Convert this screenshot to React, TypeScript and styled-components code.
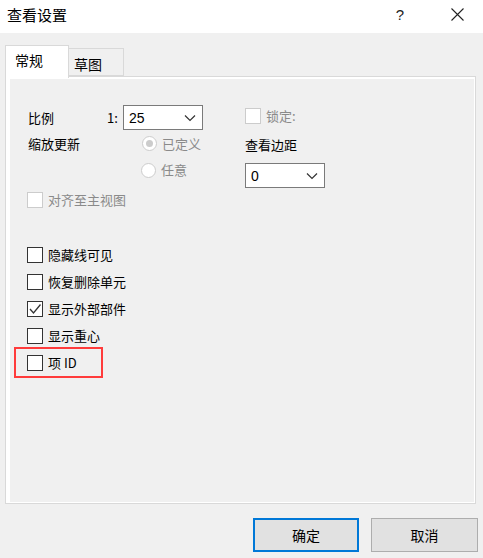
import React from 'react';
import styled, { createGlobalStyle } from 'styled-components';

const GlobalStyle = createGlobalStyle`
  html, body {
    margin: 0;
    padding: 0;
    background: #f0f0f0;
  }
  body {
    font-family: "Noto Sans CJK SC", "Microsoft YaHei", "Noto Sans", sans-serif;
    font-size: 13px;
    color: #000;
  }
`;

const Dialog = styled.div`
  width: 483px;
  height: 558px;
  display: flex;
  flex-direction: column;
  background: #f0f0f0;
  overflow: hidden;
`;

const TitleBar = styled.div`
  height: 33px;
  background: #fff;
  display: flex;
  align-items: center;
  padding-left: 7px;
  padding-right: 6px;
`;

const Title = styled.div`
  flex: 1;
  font-size: 15px;
  line-height: 20px;
  margin-top: -3px;
`;

const TitleButton = styled.div<{ $gap?: number }>`
  width: 40px;
  height: 33px;
  margin-right: ${p => p.$gap || 0}px;
  display: flex;
  align-items: center;
  justify-content: center;
  font-family: "Segoe UI", "Liberation Sans", sans-serif;
  font-size: 15px;
  color: #222;
  margin-top: -4px;
`;

const Body = styled.div`
  flex: 1;
  padding: 12px 5px 0 5px;
  display: flex;
  flex-direction: column;
`;

const TabRow = styled.div`
  display: flex;
  align-items: flex-end;
  height: 31px;
  position: relative;
  z-index: 1;
`;

const Tab = styled.div<{ $active?: boolean }>`
  box-sizing: border-box;
  height: ${p => (p.$active ? 33 : 28)}px;
  margin-bottom: ${p => (p.$active ? -2 : 0)}px;
  padding: ${p => (p.$active ? '4px 0 0 9px' : '5px 0 0 5px')};
  width: ${p => (p.$active ? 64 : 55)}px;
  background: ${p => (p.$active ? '#fff' : '#f0f0f0')};
  border: 1px solid #d9d9d9;
  border-bottom: ${p => (p.$active ? 'none' : '1px solid #d9d9d9')};
  border-left: ${p => (p.$active ? '1px solid #d9d9d9' : 'none')};
  font-size: 14px;
  line-height: 20px;
`;

const Panel = styled.div`
  box-sizing: border-box;
  width: 471px;
  height: 428px;
  border: 1px solid #d9d9d9;
  background: #fff;
  padding: 2px 1px 1px 4px;
  display: flex;
`;

const PanelInner = styled.div`
  flex: 1;
  background: #f0f0f0;
  padding: 26px 0 0 17px;
  display: flex;
  flex-direction: column;
`;

const TopGrid = styled.div`
  display: grid;
  grid-template-columns: 218px 1fr;
`;

const Column = styled.div`
  display: flex;
  flex-direction: column;
`;

const Row = styled.div<{ $h: number; $indent?: number }>`
  height: ${p => p.$h}px;
  display: flex;
  align-items: center;
  padding-left: ${p => p.$indent || 0}px;
`;

const Label = styled.span<{ $w?: number; $disabled?: boolean }>`
  display: inline-block;
  width: ${p => (p.$w ? `${p.$w}px` : 'auto')};
  color: ${p => (p.$disabled ? '#8a8a8a' : '#000')};
  line-height: 18px;
  white-space: nowrap;
`;

const Select = styled.div<{ $w: number }>`
  box-sizing: border-box;
  width: ${p => p.$w}px;
  height: 25px;
  border: 1px solid #7a7a7a;
  background: #fff;
  display: flex;
  align-items: center;
  padding: 0 6px 0 5px;
  font-family: "Segoe UI", "Liberation Sans", sans-serif;
  font-size: 14px;
  span {
    flex: 1;
  }
`;

const Box = styled.div<{ $disabled?: boolean }>`
  box-sizing: border-box;
  width: 16px;
  height: 16px;
  flex: none;
  border: 1px solid ${p => (p.$disabled ? '#cccccc' : '#333333')};
  background: #fff;
  margin-right: 5px;
  display: flex;
  align-items: center;
  justify-content: center;
`;

const Radio = styled.div<{ $checked?: boolean }>`
  box-sizing: border-box;
  width: 15px;
  height: 15px;
  flex: none;
  border-radius: 50%;
  border: 1px solid #cccccc;
  background: #fff;
  margin-right: 5px;
  display: flex;
  align-items: center;
  justify-content: center;
  &::after {
    content: '';
    display: ${p => (p.$checked ? 'block' : 'none')};
    width: 7px;
    height: 7px;
    border-radius: 50%;
    background: #cccccc;
  }
`;

const CheckList = styled.div`
  margin-top: 24px;
  display: flex;
  flex-direction: column;
`;

const CheckRow = styled.div`
  height: 27px;
  display: flex;
  align-items: center;
`;

const Highlight = styled.div`
  box-sizing: border-box;
  width: 89px;
  height: 31px;
  margin-left: -13px;
  padding-left: 11px;
  border: 2px solid #ff3b3b;
  display: flex;
  align-items: center;
`;

const Footer = styled.div`
  display: flex;
  justify-content: flex-end;
  gap: 12px;
  padding-top: 14px;
`;

const Button = styled.div<{ $primary?: boolean; $w: number }>`
  box-sizing: border-box;
  width: ${p => p.$w}px;
  height: 34px;
  background: #e1e1e1;
  border: ${p => (p.$primary ? '2px solid #0078d7' : '1px solid #adadad')};
  display: flex;
  align-items: center;
  justify-content: center;
  font-size: 14px;
`;

const Chevron = () => (
  <svg width="12" height="8" viewBox="0 0 12 8">
    <path d="M1 1.5 L6 6.5 L11 1.5" fill="none" stroke="#333" strokeWidth="1.2" />
  </svg>
);

const Check = () => (
  <svg width="14" height="14" viewBox="0 0 14 14">
    <path d="M2 7 L5.5 11 L12.5 2.5" fill="none" stroke="#333" strokeWidth="1.3" />
  </svg>
);

const CloseIcon = () => (
  <svg width="13" height="13" viewBox="0 0 13 13">
    <path d="M0.5 0.5 L12.5 12.5 M12.5 0.5 L0.5 12.5" stroke="#222" strokeWidth="1.1" />
  </svg>
);

const options = [
  { label: '隐藏线可见', checked: false },
  { label: '恢复删除单元', checked: false },
  { label: '显示外部部件', checked: true },
  { label: '显示重心', checked: false },
];

export default function App() {
  return (
    <Dialog>
      <GlobalStyle />
      <TitleBar>
        <Title>查看设置</Title>
        <TitleButton $gap={17}>?</TitleButton>
        <TitleButton>
          <CloseIcon />
        </TitleButton>
      </TitleBar>
      <Body>
        <TabRow>
          <Tab $active>常规</Tab>
          <Tab>草图</Tab>
        </TabRow>
        <Panel>
          <PanelInner>
            <TopGrid>
              <Column>
                <Row $h={25}>
                  <Label $w={79} style={{ paddingLeft: 1 }}>比例</Label>
                  <Label $w={16}>1:</Label>
                  <Select $w={80}>
                    <span>25</span>
                    <Chevron />
                  </Select>
                </Row>
                <Row $h={27}>
                  <Label $w={114} style={{ paddingLeft: 1 }}>缩放更新</Label>
                  <Radio $checked />
                  <Label $disabled>已定义</Label>
                </Row>
                <Row $h={26} $indent={114}>
                  <Radio />
                  <Label $disabled>任意</Label>
                </Row>
                <Row $h={34}>
                  <Box $disabled />
                  <Label $disabled>对齐至主视图</Label>
                </Row>
              </Column>
              <Column>
                <Row $h={21}>
                  <Box $disabled />
                  <Label $disabled>锁定:</Label>
                </Row>
                <Row $h={37}>
                  <Label>查看边距</Label>
                </Row>
                <Select $w={80}>
                  <span>0</span>
                  <Chevron />
                </Select>
              </Column>
            </TopGrid>
            <CheckList>
              {options.map(o => (
                <CheckRow key={o.label}>
                  <Box>{o.checked && <Check />}</Box>
                  <Label>{o.label}</Label>
                </CheckRow>
              ))}
              <CheckRow>
                <Highlight>
                  <Box />
                  <Label>项 ID</Label>
                </Highlight>
              </CheckRow>
            </CheckList>
          </PanelInner>
        </Panel>
        <Footer>
          <Button $primary $w={106}>确定</Button>
          <Button $w={107}>取消</Button>
        </Footer>
      </Body>
    </Dialog>
  );
}
